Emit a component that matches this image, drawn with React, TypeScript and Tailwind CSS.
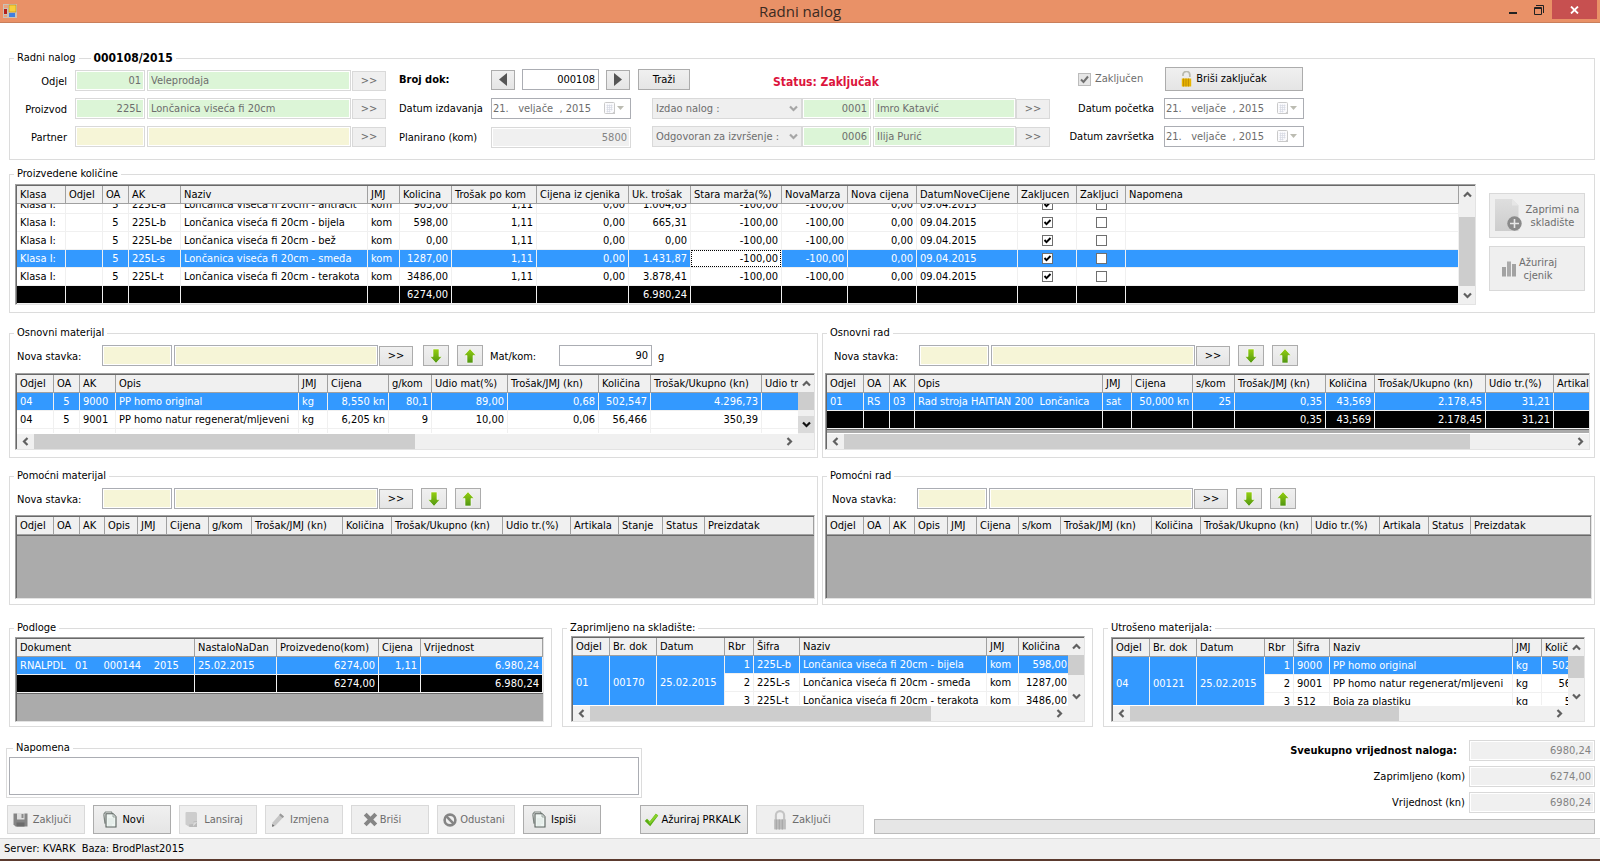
import type { ReactNode } from "react";

type Align = "l" | "r" | "c";
type Col = { title: string; w?: number; align?: Align };
type Cell = string | boolean | { text: string; span: number };
type Row = { cells: Cell[]; kind?: "selected" | "total" | "clipped"; focus?: number };

/* ---------- icons ---------- */

function AppIcon() {
    return (
        <svg width="14" height="14" viewBox="0 0 14 14">
            <rect width="14" height="14" fill="#c9c2b8" />
            <rect x="1" y="1" width="4" height="3" fill="#eaa27e" />
            <rect x="1" y="5" width="3" height="5" fill="#b3201c" />
            <rect x="6" y="1" width="7" height="7" fill="#f8cf3c" stroke="#b98d10" strokeWidth="0.6" />
            <rect x="6" y="9" width="6" height="4" fill="#3f7fe0" />
            <rect x="1" y="11" width="3" height="2" fill="#eaa27e" />
        </svg>
    );
}

function ArrowIcon({ up }: { up?: boolean }) {
    return (
        <svg width="14" height="16" viewBox="0 0 14 16" className={up ? "" : "rotate-180"}>
            <defs>
                <linearGradient id={up ? "arrowUp" : "arrowDown"} x1="0" y1={up ? "0" : "1"} x2="0" y2={up ? "1" : "0"}>
                    <stop offset="0" stopColor="#96d010" />
                    <stop offset="1" stopColor="#4f9412" />
                </linearGradient>
            </defs>
            <path
                d="M7 .8 13 7.400H10V15H4V7.400H1Z"
                fill={up ? "url(#arrowUp)" : "url(#arrowDown)"}
                stroke="#fff"
                strokeWidth="0.6"
            />
        </svg>
    );
}

function LockIcon({ open }: { open?: boolean }) {
    const body = open ? "#e8b500" : "#bdbdbd";
    const dark = open ? "#c08d00" : "#a9a9a9";
    return (
        <svg width={open ? 11 : 14} height={open ? 16 : 20} viewBox="0 0 11 16">
            <path
                d={open ? "M2 5V4a3.3 3.3 0 0 1 6.8-.4V6" : "M2.2 8V4.2a3.3 3.3 0 0 1 6.6 0V8"}
                fill="none"
                stroke={open ? "#b9b9ae" : "#c4c4c4"}
                strokeWidth="1.7"
            />
            <rect x="0.8" y="7.5" width="9.4" height="8" fill={body} />
            <path d="M2.6 7.5v8M5 7.5v8M7.4 7.5v8" stroke={dark} strokeWidth="1" />
        </svg>
    );
}

function CalendarIcon() {
    return (
        <svg width="22" height="14" viewBox="0 0 22 14">
            <rect x="0.5" y="0.5" width="10" height="11" rx="1" fill="#fbfbfd" stroke="#c9c9c9" />
            <path d="M2.5 3.5h6M2.5 5.5h6M2.5 7.5h6M2.5 9.5h4M3.5 2.5v8M5.5 2.5v8M7.5 2.5v6" stroke="#d5d8e2" strokeWidth="0.7" />
            <path d="M7.5 12 11 8.5V12Z" fill="#c9c9c9" />
            <path d="M13 4h7l-3.5 4Z" fill="#bcbcb2" />
        </svg>
    );
}

function PagesIcon() {
    return (
        <svg width="14" height="17" viewBox="0 0 14 17">
            <path d="M.8 3.2 2.5 1h6l1 2M.8 3.2 2 12.6" fill="none" stroke="#7c8580" strokeWidth="1.2" />
            <path d="M3 2.8h7.2l2.8 3V16H3Z" fill="#eef5f2" stroke="#59615d" strokeWidth="1.1" />
            <path d="M10 3v3h3" fill="#dfe8e4" stroke="#8b948f" strokeWidth="0.8" />
            <path d="M5 8h6M5 10h6M5 12h6M5 14h4" stroke="#d8e2de" strokeWidth="0.8" />
        </svg>
    );
}

function DiskIcon() {
    return (
        <svg width="15" height="15" viewBox="0 0 15 15">
            <path d="M.5 1.5h14v13h-12l-2-2Z" fill="#858585" />
            <rect x="4" y="1" width="7.5" height="6.5" fill="#dedede" />
            <rect x="8.5" y="2" width="2" height="4" fill="#8a8a8a" />
            <rect x="3.5" y="10.500" width="8" height="4" fill="#6c6c6c" />
        </svg>
    );
}

function NoteIcon() {
    return (
        <svg width="14" height="17" viewBox="0 0 14 17">
            <path d="M1.5 1h9a1.5 1.5 0 0 1 1.5 1.500V16H4.500L.5 13.500V2A1 1 0 0 1 1.500 1Z" fill="#cdcdcd" />
            <path d="M4 13.500 8 13l.5-2.500 3.500-.5V16H4.500Z" fill="#bababa" />
            <path d="M8 15.500 8.500 11.500 12.500 11Z" fill="#dcdcdc" />
        </svg>
    );
}

function PencilIcon() {
    return (
        <svg width="14" height="16" viewBox="0 0 14 16">
            <path d="M9.500 1.500 13 4.500 4.500 13.500 1 14.800 1.600 10.600Z" fill="#c6c6c6" />
            <path d="M9.500 1.500 13 4.500 11.600 6 8.100 3Z" fill="#9a9a9a" />
            <path d="M1.400 12 1 14.800 3.500 13.900Z" fill="#666" />
        </svg>
    );
}

function CrossIcon() {
    return (
        <svg width="15" height="15" viewBox="0 0 15 15">
            <path d="M2.200 2.200 12.800 12.800M12.800 2.200 2.200 12.800" stroke="#858585" strokeWidth="4" />
        </svg>
    );
}

function BanIcon() {
    return (
        <svg width="14" height="14" viewBox="0 0 14 14">
            <circle cx="7" cy="7" r="5.400" fill="none" stroke="#858585" strokeWidth="2.600" />
            <path d="M3.200 3.200 10.800 10.800" stroke="#858585" strokeWidth="2.600" />
        </svg>
    );
}

function CheckIcon() {
    return (
        <svg width="15" height="14" viewBox="0 0 15 14">
            <path d="M.8 8 3 5.800 5.800 8.600 11.800 .8 14.200 2.600 6.200 13.200Z" fill="#58ad12" />
            <path d="M3 5.800 5.800 8.600 11.800 .8 14.200 2.600 6 11Z" fill="#86cf2b" />
        </svg>
    );
}

function PageAddIcon() {
    return (
        <svg width="27" height="33" viewBox="0 0 27 33">
            <defs>
                <linearGradient id="pageAdd" x1="0" y1="0" x2="0" y2="1">
                    <stop offset="0" stopColor="#dedede" />
                    <stop offset="1" stopColor="#cdcdcd" />
                </linearGradient>
            </defs>
            <path d="M0 0h17l6.500 6.500V32H0Z" fill="url(#pageAdd)" />
            <path d="M17 0v6.500h6.500Z" fill="#e6e6e6" />
            <circle cx="19.500" cy="24.500" r="7.200" fill="#8a8a8a" />
            <path d="M19.500 20v9M15 24.500h9" stroke="#e8e8e8" strokeWidth="1.600" />
        </svg>
    );
}

function BarsIcon() {
    return (
        <svg width="16" height="16" viewBox="0 0 16 16">
            <rect x="1" y="6" width="4" height="9.500" fill="#a2a2a2" />
            <rect x="6" y="0.500" width="4" height="15" fill="#aaaaaa" />
            <rect x="11" y="3" width="4" height="12.500" fill="#a2a2a2" />
        </svg>
    );
}

function Chevron({ dir, dark }: { dir: "up" | "down" | "left" | "right"; dark?: boolean }) {
    const paths = {
        up: "M1 6.500 4.500 3 8 6.500",
        down: "M1 2.500 4.500 6 8 2.500",
        left: "M6.500 1 3 4.500 6.500 8",
        right: "M2.500 1 6 4.500 2.500 8",
    };
    return (
        <svg width="9" height="9" viewBox="0 0 9 9">
            <path d={paths[dir]} fill="none" stroke={dark ? "#111" : "#606060"} strokeWidth="2.200" />
        </svg>
    );
}

/* ---------- controls ---------- */

function GroupBox({ title, extra, className = "", children }: { title: string; extra?: ReactNode; className?: string; children: ReactNode }) {
    return (
        <fieldset className={`min-w-0 border border-[#dcdcdc] ${className}`}>
            <legend className="ml-1 flex h-[14px] items-center px-[3px] leading-[14px] whitespace-nowrap">
                {title}
                {extra}
            </legend>
            {children}
        </fieldset>
    );
}

const fieldColors = {
    green: "border-[#d9d9d9] bg-[#dcf5d7] text-[#6d6d6d]",
    paleYellow: "border-[#d9d9d9] bg-[#f6f5d7] text-[#6d6d6d]",
    yellow: "border-[#abadb3] bg-[#f6f5d7] text-black",
    gray: "border-[#d9d9d9] bg-[#f0f0f0] text-[#838383]",
    white: "border-[#abadb3] bg-white text-black",
};

type FieldProps = {
    label?: string;
    id?: string;
    value?: string;
    tone: keyof typeof fieldColors;
    className?: string;
};

function Field({ label, id, value = "", tone, className = "" }: FieldProps) {
    return (
        <input
            id={id}
            aria-label={label}
            type="text"
            defaultValue={value}
            disabled={tone === "green" || tone === "paleYellow" || tone === "gray"}
            className={`h-[21px] shrink-0 border px-[3px] leading-4 shadow-[inset_0_0_0_1px_#fff] ${fieldColors[tone]} ${className}`}
        />
    );
}

function Button({ disabled, label, className = "", children }: { disabled?: boolean; label?: string; className?: string; children: ReactNode }) {
    const look = disabled
        ? "border-[#d9d9d9] bg-[#efefef] text-[#6d6d6d]"
        : "border-[#acacac] bg-linear-to-b from-[#f0f0f0] to-[#e5e5e5] text-black";
    return (
        <button
            type="button"
            disabled={disabled}
            aria-label={label}
            className={`flex shrink-0 items-center justify-center border whitespace-nowrap ${look} ${className}`}
        >
            {children}
        </button>
    );
}

function DateField({ id }: { id: string }) {
    return (
        <div className="flex h-[21px] w-[140px] items-center border border-[#abadb3] bg-white">
            <input id={id} type="text" disabled defaultValue="21.   veljače  , 2015" className="w-0 flex-1 pl-px text-[#6d6d6d]" />
            <button type="button" disabled aria-label="Otvori kalendar" className="pr-1">
                <CalendarIcon />
            </button>
        </div>
    );
}

function PersonRow({ role, code, name }: { role: string; code: string; name: string }) {
    return (
        <div className="flex h-[21px] items-end">
            <div className="relative w-[150px]">
                <select aria-label={role} disabled className="h-[21px] w-full appearance-none border border-[#d9d9d9] bg-[#efefef] px-[3px] text-[#6d6d6d] opacity-100">
                    <option>{role}</option>
                </select>
                <span className="absolute top-1.5 right-1 opacity-50">
                    <Chevron dir="down" />
                </span>
            </div>
            <Field label={`${role} šifra`} value={code} tone="green" className="mr-0.5 w-[69px] text-right" />
            <Field label={`${role} ime`} value={name} tone="green" className="w-[143px]" />
            <Button disabled className="h-5 w-[34px]">{">>"}</Button>
        </div>
    );
}

function LookupRow({ id, label, code, name, tone }: { id: string; label: string; code?: string; name?: string; tone: "green" | "paleYellow" }) {
    return (
        <div className="flex h-[21px] items-end">
            <label htmlFor={id} className="mr-2 w-[57px] text-right leading-[19px]">
                {label}
            </label>
            <Field id={id} value={code} tone={tone} className="mr-0.5 w-[70px] text-right" />
            <Field label={`${label} naziv`} value={name} tone={tone} className="mr-px w-[204px]" />
            <Button disabled className="h-5 w-[34px]">{">>"}</Button>
        </div>
    );
}

function NewItemRow({ id, className, arrowGap = "mr-2", children }: { id: string; className: string; arrowGap?: string; children?: ReactNode }) {
    return (
        <div className={`flex h-[21px] items-end ${className}`}>
            <label htmlFor={id} className="w-[85px] shrink-0 leading-[19px]">
                Nova stavka:
            </label>
            <Field id={id} tone="yellow" className="mr-0.5 w-[70px]" />
            <Field label="Naziv stavke" tone="yellow" className="mr-px w-[204px]" />
            <Button className={`h-5 w-[34px] ${arrowGap}`}>{">>"}</Button>
            <Button label="Pomakni dolje" className="mr-2 h-[21px] w-[26px]">
                <ArrowIcon />
            </Button>
            <Button label="Pomakni gore" className="h-[21px] w-[26px]">
                <ArrowIcon up />
            </Button>
            {children}
        </div>
    );
}

function Tick({ checked }: { checked: boolean }) {
    return (
        <span className="relative mx-auto mt-[3px] block size-[11px]">
            <input
                type="checkbox"
                aria-label="Zaključeno"
                defaultChecked={checked}
                className="block size-[11px] appearance-none border border-[#6f6f6f] bg-white"
            />
            {checked && (
                <svg width="11" height="11" viewBox="0 0 11 11" className="pointer-events-none absolute inset-0">
                    <path d="M2.500 5 4.500 7.200 8.500 3" fill="none" stroke="#000" strokeWidth="1.900" />
                </svg>
            )}
        </span>
    );
}

/* ---------- data grid ---------- */

// thumb is [start, size] in percent of the track between the two arrows
function ScrollBar({ vertical, thumb, pressed }: { vertical?: boolean; thumb: [number, number]; pressed?: boolean }) {
    const [start, size] = thumb;
    if (vertical) {
        return (
            <div className="flex w-4 shrink-0 flex-col bg-[#f0f0f0]">
                <span className="flex h-[17px] shrink-0 items-center justify-center">
                    <Chevron dir="up" />
                </span>
                <div className="min-h-0 flex-1">
                    <div style={{ height: `${start}%` }} />
                    <div className="bg-[#cdcdcd]" style={{ height: `${size}%` }} />
                </div>
                <span className={`flex h-[17px] shrink-0 items-center justify-center ${pressed ? "bg-[#dadada]" : ""}`}>
                    <Chevron dir="down" dark={pressed} />
                </span>
            </div>
        );
    }
    return (
        <div className="flex h-4 shrink-0 border-t border-white bg-[#f0f0f0]">
            <span className="flex w-[17px] shrink-0 items-center justify-center">
                <Chevron dir="left" />
            </span>
            <div className="flex min-w-0 flex-1">
                <div style={{ width: `${start}%` }} />
                <div className="bg-[#cdcdcd]" style={{ width: `${size}%` }} />
            </div>
            <span className="flex w-[17px] shrink-0 items-center justify-center">
                <Chevron dir="right" />
            </span>
        </div>
    );
}

const alignClass = { l: "text-left", r: "text-right", c: "text-center" };
const rowClass = {
    normal: "bg-white text-black",
    clipped: "bg-white text-black",
    selected: "bg-[#3399ff] text-white",
    total: "bg-black text-white",
};

type GridProps = {
    name: string;
    cols: Col[];
    rows?: Row[];
    className: string;
    vThumb?: [number, number];
    vPressed?: boolean;
    hThumb?: [number, number];
    closed?: boolean;
};

function Grid({ name, cols, rows = [], className, vThumb, vPressed, hThumb, closed }: GridProps) {
    // columns covered by a rowSpan cell are skipped in the rows below it
    const spanned = rows.length > 0 ? rows[0].cells.filter((c) => typeof c === "object").length : 0;

    return (
        <div className={`border border-t-[#a0a0a0] border-r-[#e3e3e3] border-b-[#e3e3e3] border-l-[#a0a0a0] ${className}`}>
            <div className="flex h-full flex-col border-t border-l border-[#696969] bg-[#ababab]">
                <div className="flex min-h-0 flex-1">
                    <div className="min-w-0 flex-1 overflow-hidden">
                        <table aria-label={name} className="w-full table-fixed border-separate border-spacing-0">
                            <colgroup>
                                {cols.map((col, i) => (
                                    <col key={i} style={col.w ? { width: col.w } : undefined} />
                                ))}
                            </colgroup>
                            <thead>
                                <tr>
                                    {cols.map((col, i) => (
                                        <th
                                            key={i}
                                            className="h-[18px] overflow-hidden border-r border-b border-[#a0a0a0] bg-[#f0f0f0] py-0 pr-0 pl-[3px] text-left leading-[17px] font-normal whitespace-nowrap"
                                        >
                                            {col.title}
                                        </th>
                                    ))}
                                </tr>
                            </thead>
                            <tbody>
                                {rows.map((row, r) => (
                                    <tr key={r} className={rowClass[row.kind ?? "normal"]}>
                                        {row.cells.map((cell, c) => {
                                            const col = cols[r > 0 ? c + spanned : c];
                                            const focused = row.focus === c;
                                            const merged = typeof cell === "object";
                                            const content = typeof cell === "boolean" ? <Tick checked={cell} /> : merged ? cell.text : cell;
                                            return (
                                                <td
                                                    key={c}
                                                    rowSpan={merged ? cell.span : undefined}
                                                    className={`overflow-hidden border-r border-b border-[#f0f0f0] p-0 whitespace-pre ${alignClass[col.align ?? "l"]} ${
                                                        focused ? "bg-white text-black" : ""
                                                    }`}
                                                >
                                                    {row.kind === "clipped" ? (
                                                        <div className="flex h-[9px] flex-col justify-end overflow-hidden">
                                                            <div className="flow-root h-[17px] shrink-0 px-[3px] leading-[17px]">{content}</div>
                                                        </div>
                                                    ) : (
                                                        <div
                                                            className={`flow-root h-[17px] ${
                                                                focused ? "border border-dotted border-black px-0.5 leading-[15px]" : "px-[3px] leading-[17px]"
                                                            }`}
                                                        >
                                                            {content}
                                                        </div>
                                                    )}
                                                </td>
                                            );
                                        })}
                                    </tr>
                                ))}
                            </tbody>
                        </table>
                        {closed && <div className="h-px bg-[#696969]" />}
                    </div>
                    {vThumb && <ScrollBar vertical thumb={vThumb} pressed={vPressed} />}
                </div>
                {hThumb && (
                    <div className="flex bg-[#f0f0f0]">
                        <div className="min-w-0 flex-1">
                            <ScrollBar thumb={hThumb} />
                        </div>
                        {vThumb && <div className="w-4" />}
                    </div>
                )}
            </div>
        </div>
    );
}

/* ---------- data ---------- */

const producedCols: Col[] = [
    { title: "Klasa", w: 49 },
    { title: "Odjel", w: 37 },
    { title: "OA", w: 26, align: "c" },
    { title: "AK", w: 52 },
    { title: "Naziv", w: 187 },
    { title: "JMJ", w: 32 },
    { title: "Kolicina", w: 52, align: "r" },
    { title: "Trošak po kom", w: 85, align: "r" },
    { title: "Cijena iz cjenika", w: 92, align: "r" },
    { title: "Uk. trošak", w: 62, align: "r" },
    { title: "Stara marža(%)", w: 91, align: "r" },
    { title: "NovaMarza", w: 66, align: "r" },
    { title: "Nova cijena", w: 69, align: "r" },
    { title: "DatumNoveCijene", w: 101 },
    { title: "Zakljucen", w: 59, align: "c" },
    { title: "Zakljuci", w: 49, align: "c" },
    { title: "Napomena" },
];

function produced(ak: string, color: string, qty: string, cost: string): Cell[] {
    return [
        "Klasa I:", "", "5", ak, `Lončanica viseća fi 20cm - ${color}`, "kom", qty, "1,11", "0,00", cost,
        "-100,00", "-100,00", "0,00", "09.04.2015", true, false, "",
    ];
}

const producedRows: Row[] = [
    { kind: "clipped", cells: produced("225L-a", "antracit", "903,00", "1.004,65") },
    { cells: produced("225L-b", "bijela", "598,00", "665,31") },
    { cells: produced("225L-be", "bež", "0,00", "0,00") },
    { kind: "selected", focus: 10, cells: produced("225L-s", "smeđa", "1287,00", "1.431,87") },
    { cells: produced("225L-t", "terakota", "3486,00", "3.878,41") },
    { kind: "total", cells: ["", "", "", "", "", "", "6274,00", "", "", "6.980,24", "", "", "", "", "", "", ""] },
];

const materialCols: Col[] = [
    { title: "Odjel", w: 37 },
    { title: "OA", w: 26, align: "c" },
    { title: "AK", w: 36 },
    { title: "Opis", w: 183 },
    { title: "JMJ", w: 29 },
    { title: "Cijena", w: 61, align: "r" },
    { title: "g/kom", w: 43, align: "r" },
    { title: "Udio mat(%)", w: 76, align: "r" },
    { title: "Trošak/JMJ (kn)", w: 91, align: "r" },
    { title: "Količina", w: 52, align: "r" },
    { title: "Trošak/Ukupno (kn)", w: 111, align: "r" },
    { title: "Udio tr.(%)", w: 68, align: "r" },
];

const materialRows: Row[] = [
    { kind: "selected", cells: ["04", "5", "9000", "PP homo original", "kg", "8,550 kn", "80,1", "89,00", "0,68", "502,547", "4.296,73", ""] },
    { cells: ["04", "5", "9001", "PP homo natur regenerat/mljeveni", "kg", "6,205 kn", "9", "10,00", "0,06", "56,466", "350,39", ""] },
    { cells: ["", "", "", "", "", "", "", "", "", "", "", ""] },
];

const workCols: Col[] = [
    { title: "Odjel", w: 37 },
    { title: "OA", w: 26 },
    { title: "AK", w: 25 },
    { title: "Opis", w: 188 },
    { title: "JMJ", w: 29 },
    { title: "Cijena", w: 61, align: "r" },
    { title: "s/kom", w: 42, align: "r" },
    { title: "Trošak/JMJ (kn)", w: 91, align: "r" },
    { title: "Količina", w: 49, align: "r" },
    { title: "Trošak/Ukupno (kn)", w: 111, align: "r" },
    { title: "Udio tr.(%)", w: 68, align: "r" },
    { title: "Artikala", w: 49 },
];

const workRows: Row[] = [
    { kind: "selected", cells: ["01", "RS", "03", "Rad stroja HAITIAN 200  Lončanica", "sat", "50,000 kn", "25", "0,35", "43,569", "2.178,45", "31,21", ""] },
    { kind: "total", cells: ["", "", "", "", "", "", "", "0,35", "43,569", "2.178,45", "31,21", ""] },
];

const auxMaterialCols: Col[] = [
    { title: "Odjel", w: 37 },
    { title: "OA", w: 26 },
    { title: "AK", w: 25 },
    { title: "Opis", w: 33 },
    { title: "JMJ", w: 29 },
    { title: "Cijena", w: 42 },
    { title: "g/kom", w: 43 },
    { title: "Trošak/JMJ (kn)", w: 91 },
    { title: "Količina", w: 49 },
    { title: "Trošak/Ukupno (kn)", w: 111 },
    { title: "Udio tr.(%)", w: 68 },
    { title: "Artikala", w: 48 },
    { title: "Stanje", w: 44 },
    { title: "Status", w: 42 },
    { title: "Preizdatak" },
];

const auxWorkCols: Col[] = [
    { title: "Odjel", w: 37 },
    { title: "OA", w: 26 },
    { title: "AK", w: 25 },
    { title: "Opis", w: 33 },
    { title: "JMJ", w: 29 },
    { title: "Cijena", w: 42 },
    { title: "s/kom", w: 42 },
    { title: "Trošak/JMJ (kn)", w: 91 },
    { title: "Količina", w: 49 },
    { title: "Trošak/Ukupno (kn)", w: 111 },
    { title: "Udio tr.(%)", w: 68 },
    { title: "Artikala", w: 49 },
    { title: "Status", w: 42 },
    { title: "Preizdatak" },
];

const baseCols: Col[] = [
    { title: "Dokument", w: 178 },
    { title: "NastaloNaDan", w: 82 },
    { title: "Proizvedeno(kom)", w: 102, align: "r" },
    { title: "Cijena", w: 42, align: "r" },
    { title: "Vrijednost", align: "r" },
];

const baseRows: Row[] = [
    { kind: "selected", cells: ["RNALPDL   01     000144    2015", "25.02.2015", "6274,00", "1,11", "6.980,24"] },
    { kind: "total", cells: ["", "", "6274,00", "", "6.980,24"] },
];

const receivedCols: Col[] = [
    { title: "Odjel", w: 37 },
    { title: "Br. dok", w: 47 },
    { title: "Datum", w: 68 },
    { title: "Rbr", w: 29, align: "r" },
    { title: "Šifra", w: 46 },
    { title: "Naziv", w: 187 },
    { title: "JMJ", w: 32 },
    { title: "Količina", w: 52, align: "r" },
];

const receivedRows: Row[] = [
    {
        kind: "selected",
        cells: [
            { text: "01", span: 3 }, { text: "00170", span: 3 }, { text: "25.02.2015", span: 3 },
            "1", "225L-b", "Lončanica viseća fi 20cm - bijela", "kom", "598,00",
        ],
    },
    { cells: ["2", "225L-s", "Lončanica viseća fi 20cm - smeđa", "kom", "1287,00"] },
    { cells: ["3", "225L-t", "Lončanica viseća fi 20cm - terakota", "kom", "3486,00"] },
];

const spentCols: Col[] = [
    { title: "Odjel", w: 37 },
    { title: "Br. dok", w: 47 },
    { title: "Datum", w: 68 },
    { title: "Rbr", w: 29, align: "r" },
    { title: "Šifra", w: 36 },
    { title: "Naziv", w: 183 },
    { title: "JMJ", w: 29 },
    { title: "Količina", w: 55, align: "r" },
];

const spentRows: Row[] = [
    {
        kind: "selected",
        cells: [
            { text: "04", span: 3 }, { text: "00121", span: 3 }, { text: "25.02.2015", span: 3 },
            "1", "9000", "PP homo original", "kg", "502,547",
        ],
    },
    { cells: ["2", "9001", "PP homo natur regenerat/mljeveni", "kg", "56,466"] },
    { cells: ["3", "512", "Boja za plastiku", "kg", "5,647"] },
];

/* ---------- sections ---------- */

function TitleBar() {
    return (
        <header className="flex h-[23px] items-start border-b border-[#c97f5b] bg-[#e99167]">
            <div className="w-[104px] pt-1 pl-[3px]">
                <AppIcon />
            </div>
            <h1 className="flex-1 text-center font-['Open_Sans',sans-serif] text-[15px] leading-[22px] text-[#3a2a22]">Radni nalog</h1>
            <div className="flex w-[104px] justify-end pr-[3px]">
                <button type="button" aria-label="Smanji" className="flex h-[19px] w-[26px] items-center justify-center">
                    <svg width="8" height="10" viewBox="0 0 8 10">
                        <path d="M0 8h8" stroke="#222" strokeWidth="2" />
                    </svg>
                </button>
                <button type="button" aria-label="Vrati" className="flex h-[19px] w-[26px] items-center justify-center">
                    <svg width="10" height="10" viewBox="0 0 10 10">
                        <path d="M.5 2.500h7v7h-7ZM.5 3.500h7M2 .5h7.500V8" fill="none" stroke="#222" />
                    </svg>
                </button>
                <button type="button" aria-label="Zatvori" className="flex h-[19px] w-[45px] items-center justify-center bg-[#c75050]">
                    <svg width="9" height="8" viewBox="0 0 9 8">
                        <path d="M1 .5 8 7.500M8 .5 1 7.500" stroke="#fff" strokeWidth="1.800" />
                    </svg>
                </button>
            </div>
        </header>
    );
}

function OrderHeader() {
    return (
        <GroupBox
            title="Radni nalog"
            className="flex-none pb-[11px]"
            extra={
                <>
                    <span className="mx-[3px] h-px w-3 bg-[#dcdcdc]" />
                    <strong className="text-xs leading-[14px]">000108/2015</strong>
                </>
            }
        >
            <div className="flex">
                <div className="flex flex-col gap-[7px] pt-[5px]">
                    <LookupRow id="odjel" label="Odjel" code="01" name="Veleprodaja" tone="green" />
                    <LookupRow id="proizvod" label="Proizvod" code="225L" name="Lončanica viseća fi 20cm" tone="green" />
                    <LookupRow id="partner" label="Partner" tone="paleYellow" />
                </div>

                <div className="ml-[13px] flex w-[291px] flex-col gap-2 pt-1">
                    <div className="flex h-[21px] items-center">
                        <label htmlFor="broj" className="w-[92px] font-bold">Broj dok:</label>
                        <Button label="Prethodni" className="mr-[7px] h-5 w-6">
                            <svg width="8" height="13" viewBox="0 0 8 13"><path d="M8 0v13L0 6.500Z" fill="#555" /></svg>
                        </Button>
                        <Field id="broj" value="000108" tone="white" className="mr-[7px] w-[77px] text-right" />
                        <Button label="Sljedeći" className="mr-2 h-5 w-6">
                            <svg width="8" height="13" viewBox="0 0 8 13"><path d="M0 0v13l8-6.500Z" fill="#555" /></svg>
                        </Button>
                        <Button className="h-[21px] w-[52px]">Traži</Button>
                    </div>
                    <div className="flex h-[21px] items-center">
                        <label htmlFor="izdano" className="w-[92px]">Datum izdavanja</label>
                        <DateField id="izdano" />
                    </div>
                    <div className="flex h-[21px] items-center">
                        <label htmlFor="planirano" className="w-[92px]">Planirano (kom)</label>
                        <Field id="planirano" value="5800" tone="gray" className="w-[140px] text-right" />
                    </div>
                </div>

                <div className="-ml-[38px] flex flex-col gap-[7px] pt-[5px]">
                    <p className="h-[21px] pl-[121px] text-xs leading-6 font-bold text-[#dc143c]">Status: Zaključak</p>
                    <PersonRow role="Izdao nalog :" code="0001" name="Imro Katavić" />
                    <PersonRow role="Odgovoran za izvršenje :" code="0006" name="Ilija Purić" />
                </div>

                <div className="ml-[18px] flex flex-col gap-[7px] pt-0.5">
                    <div className="flex h-6 items-center">
                        <label className="flex w-[97px] items-center gap-1 pl-[10px] text-[#6d6d6d]">
                            <span className="relative size-[13px]">
                                <input type="checkbox" disabled defaultChecked className="block size-[13px] appearance-none border border-[#bcbcbc] bg-[#e6e6e6]" />
                                <svg width="13" height="13" viewBox="0 0 13 13" className="absolute inset-0">
                                    <path d="M3 6.500 5.500 9 10 3.500" fill="none" stroke="#707070" strokeWidth="2" />
                                </svg>
                            </span>
                            Zaključen
                        </label>
                        <Button className="h-6 w-[138px] gap-1 pr-5">
                            <LockIcon open />
                            Briši zaključak
                        </Button>
                    </div>
                    <div className="flex h-[21px] items-center">
                        <label htmlFor="pocetak" className="mr-[10px] w-[86px] text-right">Datum početka</label>
                        <DateField id="pocetak" />
                    </div>
                    <div className="flex h-[21px] items-center">
                        <label htmlFor="zavrsetak" className="mr-[10px] w-[86px] text-right">Datum završetka</label>
                        <DateField id="zavrsetak" />
                    </div>
                </div>
            </div>
        </GroupBox>
    );
}

function ProducedSection() {
    return (
        <GroupBox title="Proizvedene količine" className="mt-[7px] pb-[7px]">
            <div className="flex pt-[3px] pl-[5px]">
                <Grid name="Proizvedene količine" cols={producedCols} rows={producedRows} className="h-[121px] min-w-0 flex-1" vThumb={[17, 82]} />
                <div className="flex w-[118px] shrink-0 flex-col gap-2 pt-[9px] pr-[9px] pl-[13px]">
                    <Button disabled className="h-[45px] gap-1 leading-[13px]">
                        <PageAddIcon />
                        <span>Zaprimi na<br />skladište</span>
                    </Button>
                    <Button disabled className="h-[45px] gap-0.5 pr-4 leading-[13px]">
                        <BarsIcon />
                        <span>Ažuriraj<br />cjenik</span>
                    </Button>
                </div>
            </div>
        </GroupBox>
    );
}

function ItemSections() {
    return (
        <>
            <div className="mt-[13px] grid grid-cols-[809fr_773fr] gap-1">
                <GroupBox title="Osnovni materijal" className="pb-[7px]">
                    <div className="pt-[5px]">
                        <NewItemRow id="osnovni-materijal" className="pl-[7px]" arrowGap="mr-2.5">
                            <label htmlFor="mat-kom" className="ml-[7px] w-[69px] leading-[19px]">Mat/kom:</label>
                            <Field id="mat-kom" value="90" tone="white" className="w-[93px] text-right" />
                            <span className="ml-1.5 leading-[19px]">g</span>
                        </NewItemRow>
                    </div>
                    <Grid
                        name="Osnovni materijal"
                        cols={materialCols}
                        rows={materialRows}
                        className="mt-[7px] mr-[2px] ml-[5px] h-[77px]"
                        vThumb={[0, 75]}
                        vPressed
                        hThumb={[0, 51]}
                    />
                </GroupBox>
                <GroupBox title="Osnovni rad" className="pb-[7px]">
                    <div className="pt-[5px]">
                        <NewItemRow id="osnovni-rad" className="pl-[11px]" />
                    </div>
                    <Grid name="Osnovni rad" cols={workCols} rows={workRows} closed className="mt-[7px] mr-1 ml-0.5 h-[77px]" hThumb={[0, 86]} />
                </GroupBox>
            </div>

            <div className="mt-[11px] grid grid-cols-[809fr_773fr] gap-1">
                <GroupBox title="Pomoćni materijal" className="pb-[5px]">
                    <div className="pt-[5px]">
                        <NewItemRow id="pomocni-materijal" className="pl-[7px]" />
                    </div>
                    <Grid name="Pomoćni materijal" cols={auxMaterialCols} closed className="mt-1.5 mr-[2px] ml-[5px] h-[84px]" />
                </GroupBox>
                <GroupBox title="Pomoćni rad" className="pb-[5px]">
                    <div className="pt-[5px]">
                        <NewItemRow id="pomocni-rad" className="pl-[9px]" />
                    </div>
                    <Grid name="Pomoćni rad" cols={auxWorkCols} closed className="mt-1.5 mr-0.5 ml-0.5 h-[84px]" />
                </GroupBox>
            </div>
        </>
    );
}

function DocumentSections() {
    return (
        <div className="mt-4 grid grid-cols-[543fr_531fr_492fr] gap-[10px]">
            <GroupBox title="Podloge" className="pb-1">
                <Grid name="Podloge" cols={baseCols} rows={baseRows} closed className="mt-0.5 mr-[7px] ml-[5px] h-[85px]" />
            </GroupBox>
            <GroupBox title="Zaprimljeno na skladište:" className="pb-1">
                <Grid
                    name="Zaprimljeno na skladište"
                    cols={receivedCols}
                    rows={receivedRows}
                    className="mt-px mr-[7px] ml-2 h-[86px]"
                    vThumb={[0, 62]}
                    hThumb={[0, 74]}
                />
            </GroupBox>
            <GroupBox title="Utrošeno materijala:" className="pb-1">
                <Grid
                    name="Utrošeno materijala"
                    cols={spentCols}
                    rows={spentRows}
                    className="mt-0.5 mr-[9px] ml-[7px] h-[85px]"
                    vThumb={[0, 70]}
                    hThumb={[0, 64]}
                />
            </GroupBox>
        </div>
    );
}

function TotalRow({ id, label, value, bold }: { id: string; label: string; value: string; bold?: boolean }) {
    return (
        <div className="flex h-[21px] items-center justify-end">
            <label htmlFor={id} className={bold ? "pr-3 font-bold" : "pr-1"}>
                {label}
            </label>
            <Field id={id} value={value} tone="gray" className="w-[126px] text-right" />
        </div>
    );
}

function Footer() {
    return (
        <div className="mt-[13px] flex pr-[5px] pl-1.5">
            <div className="flex flex-col pt-px">
                <GroupBox title="Napomena" className="w-[636px] px-0.5 pb-0.5">
                    <textarea aria-label="Napomena" className="mt-0.5 block h-[38px] w-full resize-none border border-[#abadb3] bg-white" />
                </GroupBox>
                <div className="mt-[7px] ml-px flex gap-2">
                    <Button disabled className="h-[29px] w-[78px] gap-[5px] pr-2"><DiskIcon />Zaključi</Button>
                    <Button className="h-[29px] w-[78px] gap-[5px] pr-4"><PagesIcon />Novi</Button>
                    <Button disabled className="h-[29px] w-[78px] gap-[5px] pr-2"><NoteIcon />Lansiraj</Button>
                    <Button disabled className="h-[29px] w-[78px] gap-[5px] pr-2"><PencilIcon />Izmjena</Button>
                    <Button disabled className="h-[29px] w-[78px] gap-0.5 pr-4"><CrossIcon />Briši</Button>
                    <Button disabled className="h-[29px] w-[78px] gap-[3px] pr-1"><BanIcon />Odustani</Button>
                    <Button className="h-[29px] w-[78px] gap-[5px] pr-4"><PagesIcon />Ispiši</Button>
                    <Button className="ml-[31px] h-[29px] w-[108px] gap-[3px] pr-1"><CheckIcon />Ažuriraj PRKALK</Button>
                    <Button disabled className="h-[29px] w-[108px] gap-[5px] pr-4"><LockIcon />Zaključi</Button>
                </div>
            </div>
            <div className="ml-[10px] flex min-w-0 flex-1 flex-col gap-[5px]">
                <TotalRow id="sveukupno" label="Sveukupno vrijednost naloga:" value="6980,24" bold />
                <TotalRow id="zaprimljeno" label="Zaprimljeno (kom)" value="6274,00" />
                <TotalRow id="vrijednost" label="Vrijednost (kn)" value="6980,24" />
                <div role="progressbar" aria-label="Napredak" aria-valuenow={0} className="mt-px h-[15px] border border-[#bcbcbc] bg-[#e6e6e6]" />
            </div>
        </div>
    );
}

export default function App() {
    return (
        <div className="flex min-h-screen flex-col overflow-hidden bg-white font-['DejaVu_Sans_Condensed','DejaVu_Sans',sans-serif] text-[11px] leading-[14px] text-black">
            <TitleBar />
            <main className="flex flex-1 flex-col">
                <div className="flex flex-col pt-7 pr-[5px] pl-[9px]">
                    <OrderHeader />
                    <ProducedSection />
                    <ItemSections />
                    <DocumentSections />
                </div>
                <Footer />
            </main>
            <footer className="mt-[3px] h-[23px] border-t border-b-2 border-t-[#d7d7d7] border-b-[#5b3a2e] bg-[#f0f0f0] pl-1 leading-5 whitespace-pre">
                Server: KVARK  Baza: BrodPlast2015
            </footer>
        </div>
    );
}
